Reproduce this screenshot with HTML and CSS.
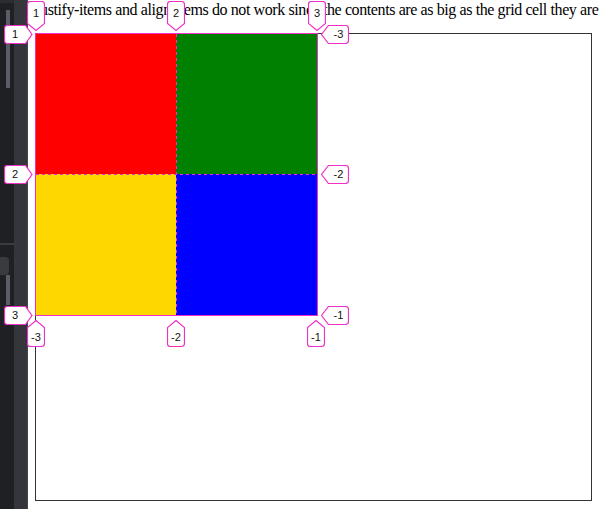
FILE: index.html
```html
<!DOCTYPE html>
<html lang="en">
<head>
<meta charset="utf-8">
<title>Grid demo</title>
<link rel="stylesheet" href="styles.css">
</head>
<body>
<div class="page">
  <aside class="side">
    <div class="rail">
      <div class="cap"></div>
      <div class="thumb t1"></div>
      <div class="divider"></div>
      <div class="tab"></div>
      <div class="thumb t2"></div>
    </div>
    <div class="gutter"></div>
  </aside>
  <main class="main">
    <p class="note">justify-items and align-items do not work since the contents are as big as the grid cell they are</p>
    <div class="box">
      <div class="grid">
        <div class="cell red"></div>
        <div class="cell green"></div>
        <div class="cell gold"></div>
        <div class="cell blue"></div>
        <div class="overlay">
          <svg class="dashes" width="281" height="281" viewBox="0 0 281 281">
            <line x1="140.5" y1="0" x2="140.5" y2="281"/>
            <line x1="0" y1="140.5" x2="281" y2="140.5"/>
          </svg>
        </div>
      </div>
    </div>
  </main>

  <div class="labels">
    <div class="badge down" style="left:27px;top:1px">
      <svg width="18" height="31" viewBox="0 0 18 31"><path d="M3.5 .5H14.5Q17.5 .5 17.5 3.5V22.5L9 29.5L.5 22.5V3.5Q.5 .5 3.5 .5Z"/></svg>
      <span>1</span>
    </div>
    <div class="badge down" style="left:167px;top:1px">
      <svg width="18" height="31" viewBox="0 0 18 31"><path d="M3.5 .5H14.5Q17.5 .5 17.5 3.5V22.5L9 29.5L.5 22.5V3.5Q.5 .5 3.5 .5Z"/></svg>
      <span>2</span>
    </div>
    <div class="badge down" style="left:308px;top:1px">
      <svg width="18" height="31" viewBox="0 0 18 31"><path d="M3.5 .5H14.5Q17.5 .5 17.5 3.5V22.5L9 29.5L.5 22.5V3.5Q.5 .5 3.5 .5Z"/></svg>
      <span>3</span>
    </div>

    <div class="badge right" style="left:4px;top:25px">
      <svg width="29" height="19" viewBox="0 0 29 19"><path d="M3.5 .5H21.5L28 9.5L21.5 18.5H3.5Q.5 18.5 .5 15.5V3.5Q.5 .5 3.5 .5Z"/></svg>
      <span>1</span>
    </div>
    <div class="badge right" style="left:4px;top:165px">
      <svg width="29" height="19" viewBox="0 0 29 19"><path d="M3.5 .5H21.5L28 9.5L21.5 18.5H3.5Q.5 18.5 .5 15.5V3.5Q.5 .5 3.5 .5Z"/></svg>
      <span>2</span>
    </div>
    <div class="badge right" style="left:4px;top:306px">
      <svg width="29" height="19" viewBox="0 0 29 19"><path d="M3.5 .5H21.5L28 9.5L21.5 18.5H3.5Q.5 18.5 .5 15.5V3.5Q.5 .5 3.5 .5Z"/></svg>
      <span>3</span>
    </div>

    <div class="badge left" style="left:321px;top:25px">
      <svg width="28" height="19" viewBox="0 0 28 19"><path d="M7.5 .5H24.5Q27.5 .5 27.5 3.5V15.5Q27.5 18.5 24.5 18.5H7.5L.5 9.5Z"/></svg>
      <span>-3</span>
    </div>
    <div class="badge left" style="left:321px;top:165px">
      <svg width="28" height="19" viewBox="0 0 28 19"><path d="M7.5 .5H24.5Q27.5 .5 27.5 3.5V15.5Q27.5 18.5 24.5 18.5H7.5L.5 9.5Z"/></svg>
      <span>-2</span>
    </div>
    <div class="badge left" style="left:321px;top:306px">
      <svg width="28" height="19" viewBox="0 0 28 19"><path d="M7.5 .5H24.5Q27.5 .5 27.5 3.5V15.5Q27.5 18.5 24.5 18.5H7.5L.5 9.5Z"/></svg>
      <span>-1</span>
    </div>

    <div class="badge up" style="left:27px;top:320px">
      <svg width="18" height="28" viewBox="0 0 18 28"><path d="M9 .5L17.5 7.5V23.5Q17.5 26.5 14.5 26.5H3.5Q.5 26.5 .5 23.5V7.5Z"/></svg>
      <span>-3</span>
    </div>
    <div class="badge up" style="left:167px;top:320px">
      <svg width="18" height="28" viewBox="0 0 18 28"><path d="M9 .5L17.5 7.5V23.5Q17.5 26.5 14.5 26.5H3.5Q.5 26.5 .5 23.5V7.5Z"/></svg>
      <span>-2</span>
    </div>
    <div class="badge up" style="left:307px;top:320px">
      <svg width="18" height="28" viewBox="0 0 18 28"><path d="M9 .5L17.5 7.5V23.5Q17.5 26.5 14.5 26.5H3.5Q.5 26.5 .5 23.5V7.5Z"/></svg>
      <span>-1</span>
    </div>
  </div>
</div>
</body>
</html>
```

FILE: styles.css
```css
html, body {
  margin: 0;
  padding: 0;
  background: #ffffff;
  overflow: hidden;
}

.page {
  position: relative;
  display: flex;
  width: 600px;
  height: 509px;
}

/* left dark strip */
.side {
  display: flex;
  flex: none;
  width: 28px;
  height: 100%;
}

.rail {
  display: flex;
  flex-direction: column;
  width: 14px;
  background: #1f2023;
}

.cap {
  height: 3px;
  background: #2c2d31;
}

.thumb {
  width: 4px;
  margin-left: 6px;
  background: #5b5d66;
}

.t1 {
  margin-top: 7px;
  height: 78px;
}

.divider {
  height: 2px;
  margin-top: 155px;
  background: #3a3b40;
}

.tab {
  width: 9px;
  height: 18px;
  margin-top: 12px;
  border-radius: 0 4px 4px 0;
  background: #3a3b40;
}

.t2 {
  height: 30px;
}

.gutter {
  width: 13px;
  background: #35363b;
  border-right: 1px solid #46474c;
}

/* content */
.main {
  flex: 1;
  min-width: 0;
  padding: 1px 0 0 7px;
}

.note {
  margin: 0;
  padding-left: 1px;
  font: 16px/18px "Liberation Serif", "Times New Roman", serif;
  letter-spacing: -0.4px;
  color: #000;
  white-space: nowrap;
}

.box {
  margin-top: 14px;
  width: 555px;
  height: 466px;
  border: 1px solid #333;
}

.grid {
  position: relative;
  display: grid;
  grid-template-columns: 140px 141px;
  grid-template-rows: 140px 141px;
  width: 281px;
}

.red { background: #ff0000; }
.green { background: #008000; }
.gold { background: #ffd700; }
.blue { background: #0000ff; }

.overlay {
  position: absolute;
  left: -1px;
  top: -1px;
  width: 281px;
  height: 281px;
  border: 1px solid #f02ec8;
}

.dashes {
  display: block;
}

.dashes line {
  stroke: #f02ec8;
  stroke-width: 1;
  stroke-dasharray: 3 3;
}

/* grid line labels */
.labels {
  position: absolute;
  left: 0;
  top: 0;
  width: 0;
  height: 0;
}

.badge {
  position: absolute;
  display: flex;
  align-items: center;
  justify-content: center;
  box-sizing: border-box;
  font: 11px/1 "Liberation Sans", Arial, sans-serif;
  color: #111;
}

.badge svg {
  position: absolute;
  left: 0;
  top: 0;
}

.badge path {
  fill: #ffffff;
  stroke: #f02ec8;
  stroke-width: 1.2;
}

.badge span {
  position: relative;
}

.badge.down {
  width: 18px;
  height: 31px;
  padding-bottom: 7px;
}

.badge.right {
  width: 29px;
  height: 19px;
  padding-right: 7px;
}

.badge.left {
  width: 28px;
  height: 19px;
  padding-left: 7px;
}

.badge.up {
  width: 18px;
  height: 28px;
  padding-top: 7px;
}
```
